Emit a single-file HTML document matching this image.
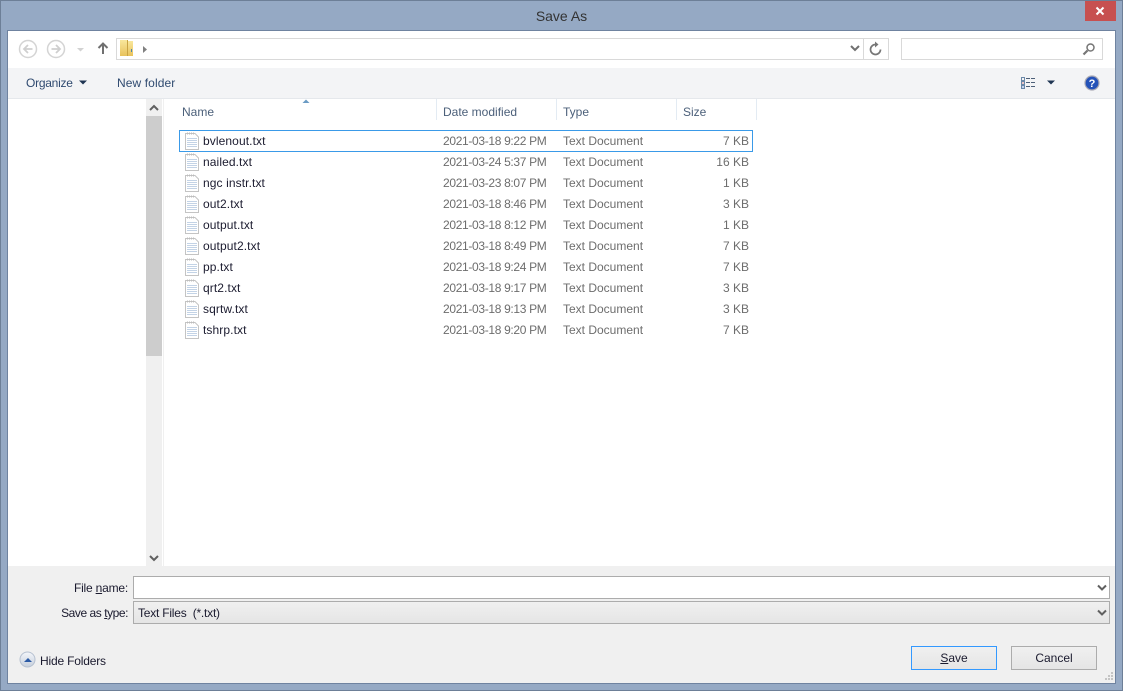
<!DOCTYPE html>
<html>
<head>
<meta charset="utf-8">
<title>Save As</title>
<style>
html,body{margin:0;padding:0;width:1123px;height:691px;overflow:hidden;background:#95a9c4;}
body{position:relative;font-family:"Liberation Sans",sans-serif;font-size:12px;color:#1a1a2e;}
.a{position:absolute;}
.t{position:absolute;white-space:nowrap;line-height:14px;}
.hd{color:#4c607a;top:105px;}
.name{left:203px;color:#1b1b2f;letter-spacing:.1px;}
.date{left:443px;color:#6d6d6d;letter-spacing:-.33px;}
.type{left:563px;color:#6d6d6d;}
.size{right:374px;color:#6d6d6d;}
.ic{position:absolute;left:185px;}
</style>
</head>
<body>
<div class="a" style="left:0;top:0;width:1121px;height:689px;border:1px solid #6d7f97;"></div>
<div class="t" style="left:0;width:1123px;top:8px;text-align:center;font-size:14px;line-height:16px;color:#333;">Save As</div>
<div class="a" style="left:1085px;top:1px;width:31px;height:20px;background:#c75050;"></div>
<svg class="a" style="left:1085px;top:1px" width="31" height="20"><path d="M11.5 6.5l7 7M18.5 6.500l-7 7" stroke="#fff" stroke-width="2"/></svg>

<div class="a" style="left:7px;top:30px;width:1109px;height:654px;background:#6f83a0;"></div>
<div class="a" style="left:8px;top:31px;width:1107px;height:652px;background:#fff;"></div>

<!-- nav -->
<svg class="a" style="left:8px;top:31px" width="150" height="37" fill="none">
<circle cx="20" cy="18" r="8.500" stroke="#d4d4d4" stroke-width="1.500"/>
<path d="M24.500 18h-8M20 14l-4 4 4 4" stroke="#cfcfcf" stroke-width="1.800"/>
<circle cx="48" cy="18" r="8.500" stroke="#d4d4d4" stroke-width="1.500"/>
<path d="M43.500 18h8M48 14l4 4-4 4" stroke="#cfcfcf" stroke-width="1.800"/>
<path d="M69 17h7l-3.500 3.500z" fill="#d2d2d2"/>
<path d="M95 23V13M90.500 17l4.500-4.500 4.500 4.500" stroke="#707070" stroke-width="2"/>
</svg>
<div class="a" style="left:116px;top:38px;width:746px;height:20px;border:1px solid #d9d9d9;background:#fff;"></div>
<svg class="a" style="left:120px;top:39px" width="30" height="19">
<defs><linearGradient id="fo" x1="0" y1="0" x2="0" y2="1"><stop offset="0" stop-color="#f9e79c"/><stop offset="1" stop-color="#e8c25c"/></linearGradient></defs>
<rect x="0" y="1" width="7" height="16" fill="url(#fo)"/>
<rect x="7" y="1" width="1" height="16" fill="#c9a443"/>
<rect x="8" y="2" width="5" height="15" fill="url(#fo)"/>
<rect x="11" y="10" width="1" height="3" fill="#4d84b0"/>
<path d="M23 7l4 3.500-4 3.500z" fill="#808080"/>
</svg>
<svg class="a" style="left:850px;top:44px" width="12" height="10" fill="none"><path d="M1 2l4 4 4-4" stroke="#707070" stroke-width="2"/></svg>
<div class="a" style="left:863px;top:38px;width:1px;height:22px;background:#d9d9d9;"></div>
<div class="a" style="left:864px;top:38px;width:24px;height:20px;border:1px solid #d9d9d9;border-left:0;"></div>
<svg class="a" style="left:868px;top:41px" width="16" height="16" fill="none"><path d="M7.500 3.500a5 5 0 1 0 5 5" stroke="#767676" stroke-width="1.700"/><path d="M7 0.500v6l3.500-3z" fill="#767676"/></svg>
<div class="a" style="left:901px;top:38px;width:200px;height:20px;border:1px solid #d9d9d9;background:#fff;"></div>
<svg class="a" style="left:1082px;top:42px" width="14" height="14" fill="none"><circle cx="8.500" cy="5.500" r="3.500" stroke="#767676" stroke-width="1.500"/><path d="M5.500 8.500L1.500 12.500" stroke="#767676" stroke-width="2.200"/></svg>

<!-- command bar -->
<div class="a" style="left:8px;top:68px;width:1107px;height:30px;background:#f3f4f6;"></div>
<div class="a" style="left:8px;top:98px;width:1107px;height:1px;background:#e5e8ec;"></div>
<div class="t" style="left:26px;top:76px;color:#2f4a70;letter-spacing:-.25px;">Organize</div>
<svg class="a" style="left:78px;top:80px" width="10" height="6"><path d="M1 0.500h8L5 4.500z" fill="#1f3553"/></svg>
<div class="t" style="left:117px;top:76px;color:#2f4a70;letter-spacing:.1px;">New folder</div>
<svg class="a" style="left:1021px;top:76px" width="36" height="14" fill="none">
<rect x="0.500" y="1.500" width="3" height="3" stroke="#6b88a8"/><rect x="0.500" y="5.500" width="3" height="3" stroke="#6b88a8"/><rect x="0.500" y="9.500" width="3" height="3" stroke="#6b88a8"/>
<rect x="1.500" y="6.500" width="1" height="1" fill="#d83b3b"/><rect x="1.500" y="10.500" width="1" height="1" fill="#3b6fd8"/>
<path d="M5 2.500h4M10 2.500h4M5 6.500h4M10 6.500h4M5 10.500h4M10 10.500h4" stroke="#4c5f78"/>
<path d="M26 4.500h8l-4 4z" fill="#1f3553"/>
</svg>
<svg class="a" style="left:1084px;top:75px" width="16" height="16">
<circle cx="8" cy="8" r="7" fill="#2452b8" stroke="#a9a9b4" stroke-width="1.200"/>
<text x="8" y="12" font-family="Liberation Sans" font-size="11" font-weight="bold" fill="#fff" text-anchor="middle">?</text>
</svg>

<!-- scrollbar -->
<div class="a" style="left:146px;top:99px;width:16px;height:467px;background:#f0f0f0;"></div>
<div class="a" style="left:146px;top:116px;width:16px;height:240px;background:#cdcdcd;"></div>
<div class="a" style="left:162px;top:99px;width:1px;height:467px;background:#fff;"></div>
<div class="a" style="left:163px;top:99px;width:1px;height:467px;background:#f0f0f0;"></div>
<svg class="a" style="left:149px;top:104px" width="10" height="8" fill="none"><path d="M1 6l4-4 4 4" stroke="#606060" stroke-width="2"/></svg>
<svg class="a" style="left:149px;top:554px" width="10" height="8" fill="none"><path d="M1 2l4 4 4-4" stroke="#606060" stroke-width="2"/></svg>

<!-- header -->
<svg class="a" style="left:302px;top:99px" width="8" height="5"><path d="M0.500 4L4 0.500 7.500 4z" fill="#6b9bc4"/></svg>
<div class="t hd" style="left:182px;">Name</div>
<div class="t hd" style="left:443px;">Date modified</div>
<div class="t hd" style="left:563px;">Type</div>
<div class="t hd" style="left:683px;">Size</div>
<div class="a" style="left:436px;top:99px;width:1px;height:21px;background:#e3ebf3;"></div>
<div class="a" style="left:556px;top:99px;width:1px;height:21px;background:#e3ebf3;"></div>
<div class="a" style="left:676px;top:99px;width:1px;height:21px;background:#e3ebf3;"></div>
<div class="a" style="left:756px;top:99px;width:1px;height:21px;background:#e3ebf3;"></div>

<!-- selection -->
<div class="a" style="left:179px;top:130px;width:572px;height:20px;border:1px solid #3a9ae8;"></div>

<svg width="0" height="0" style="position:absolute"><defs>
<symbol id="f" viewBox="0 0 14 18">
<path d="M0.500 1.500H10l3.500 3.500v12.500H0.500z" fill="#fff" stroke="#c4c4c4"/>
<path d="M2.500 0.500v2M4.500 0.500v2M6.500 0.500v2M8.500 0.500v2" stroke="#bdbdbd"/>
<path d="M2 6.500h10M2 8.500h10M2 10.500h10M2 12.500h10M2 14.500h10" stroke="#c3d3e6"/>
</symbol></defs></svg>

<!-- rows -->
<svg class="ic" style="top:132px" width="14" height="18"><use href="#f"/></svg>
<div class="t name" style="top:134px">bvlenout.txt</div><div class="t date" style="top:134px">2021-03-18 9:22 PM</div><div class="t type" style="top:134px">Text Document</div><div class="t size" style="top:134px">7 KB</div>
<svg class="ic" style="top:153px" width="14" height="18"><use href="#f"/></svg>
<div class="t name" style="top:155px">nailed.txt</div><div class="t date" style="top:155px">2021-03-24 5:37 PM</div><div class="t type" style="top:155px">Text Document</div><div class="t size" style="top:155px">16 KB</div>
<svg class="ic" style="top:174px" width="14" height="18"><use href="#f"/></svg>
<div class="t name" style="top:176px">ngc instr.txt</div><div class="t date" style="top:176px">2021-03-23 8:07 PM</div><div class="t type" style="top:176px">Text Document</div><div class="t size" style="top:176px">1 KB</div>
<svg class="ic" style="top:195px" width="14" height="18"><use href="#f"/></svg>
<div class="t name" style="top:197px">out2.txt</div><div class="t date" style="top:197px">2021-03-18 8:46 PM</div><div class="t type" style="top:197px">Text Document</div><div class="t size" style="top:197px">3 KB</div>
<svg class="ic" style="top:216px" width="14" height="18"><use href="#f"/></svg>
<div class="t name" style="top:218px">output.txt</div><div class="t date" style="top:218px">2021-03-18 8:12 PM</div><div class="t type" style="top:218px">Text Document</div><div class="t size" style="top:218px">1 KB</div>
<svg class="ic" style="top:237px" width="14" height="18"><use href="#f"/></svg>
<div class="t name" style="top:239px">output2.txt</div><div class="t date" style="top:239px">2021-03-18 8:49 PM</div><div class="t type" style="top:239px">Text Document</div><div class="t size" style="top:239px">7 KB</div>
<svg class="ic" style="top:258px" width="14" height="18"><use href="#f"/></svg>
<div class="t name" style="top:260px">pp.txt</div><div class="t date" style="top:260px">2021-03-18 9:24 PM</div><div class="t type" style="top:260px">Text Document</div><div class="t size" style="top:260px">7 KB</div>
<svg class="ic" style="top:279px" width="14" height="18"><use href="#f"/></svg>
<div class="t name" style="top:281px">qrt2.txt</div><div class="t date" style="top:281px">2021-03-18 9:17 PM</div><div class="t type" style="top:281px">Text Document</div><div class="t size" style="top:281px">3 KB</div>
<svg class="ic" style="top:300px" width="14" height="18"><use href="#f"/></svg>
<div class="t name" style="top:302px">sqrtw.txt</div><div class="t date" style="top:302px">2021-03-18 9:13 PM</div><div class="t type" style="top:302px">Text Document</div><div class="t size" style="top:302px">3 KB</div>
<svg class="ic" style="top:321px" width="14" height="18"><use href="#f"/></svg>
<div class="t name" style="top:323px">tshrp.txt</div><div class="t date" style="top:323px">2021-03-18 9:20 PM</div><div class="t type" style="top:323px">Text Document</div><div class="t size" style="top:323px">7 KB</div>

<!-- bottom -->
<div class="a" style="left:8px;top:566px;width:1107px;height:117px;background:#f0f0f0;"></div>
<div class="t" style="right:995px;top:581px;letter-spacing:-.2px;">File <u>n</u>ame:</div>
<div class="t" style="right:995px;top:606px;letter-spacing:-.45px;">Save as <u>t</u>ype:</div>
<div class="a" style="left:133px;top:576px;width:975px;height:21px;border:1px solid #acacac;background:#fff;"></div>
<div class="a" style="left:133px;top:601px;width:975px;height:21px;border:1px solid #acacac;background:linear-gradient(#f0f0f0,#e5e5e5);"></div>
<div class="t" style="left:138px;top:606px;white-space:pre;letter-spacing:-.22px;">Text Files  (*.txt)</div>
<svg class="a" style="left:1097px;top:584px" width="12" height="8" fill="none"><path d="M1 1.500l4 4 4-4" stroke="#606060" stroke-width="2"/></svg>
<svg class="a" style="left:1097px;top:609px" width="12" height="8" fill="none"><path d="M1 1.500l4 4 4-4" stroke="#606060" stroke-width="2"/></svg>

<svg class="a" style="left:19px;top:651px" width="18" height="18">
<defs><linearGradient id="g" x1="0" y1="0" x2="0" y2="1"><stop offset="0" stop-color="#f4f6fa"/><stop offset="1" stop-color="#c6cfdc"/></linearGradient></defs>
<circle cx="8.500" cy="8.500" r="7.500" fill="url(#g)" stroke="#b5c0d0"/>
<path d="M5 11L9 7l4 4z" fill="#2b5aa5"/>
</svg>
<div class="t" style="left:40px;top:654px;letter-spacing:-.18px;">Hide Folders</div>

<div class="a" style="left:911px;top:646px;width:84px;height:22px;border:1px solid #3399ff;background:linear-gradient(#f0f0f0,#e5e5e5);"></div>
<div class="t" style="left:911px;width:86px;top:651px;text-align:center;"><u>S</u>ave</div>
<div class="a" style="left:1011px;top:646px;width:84px;height:22px;border:1px solid #acacac;background:linear-gradient(#f0f0f0,#e5e5e5);"></div>
<div class="t" style="left:1011px;width:86px;top:651px;text-align:center;">Cancel</div>
<svg class="a" style="left:1103px;top:671px" width="11" height="11"><path d="M8 1h2v2H8zM5 4h2v2H5zM8 4h2v2H8zM2 7h2v2H2zM5 7h2v2H5zM8 7h2v2H8z" fill="#c4c4c4"/></svg>
</body>
</html>
